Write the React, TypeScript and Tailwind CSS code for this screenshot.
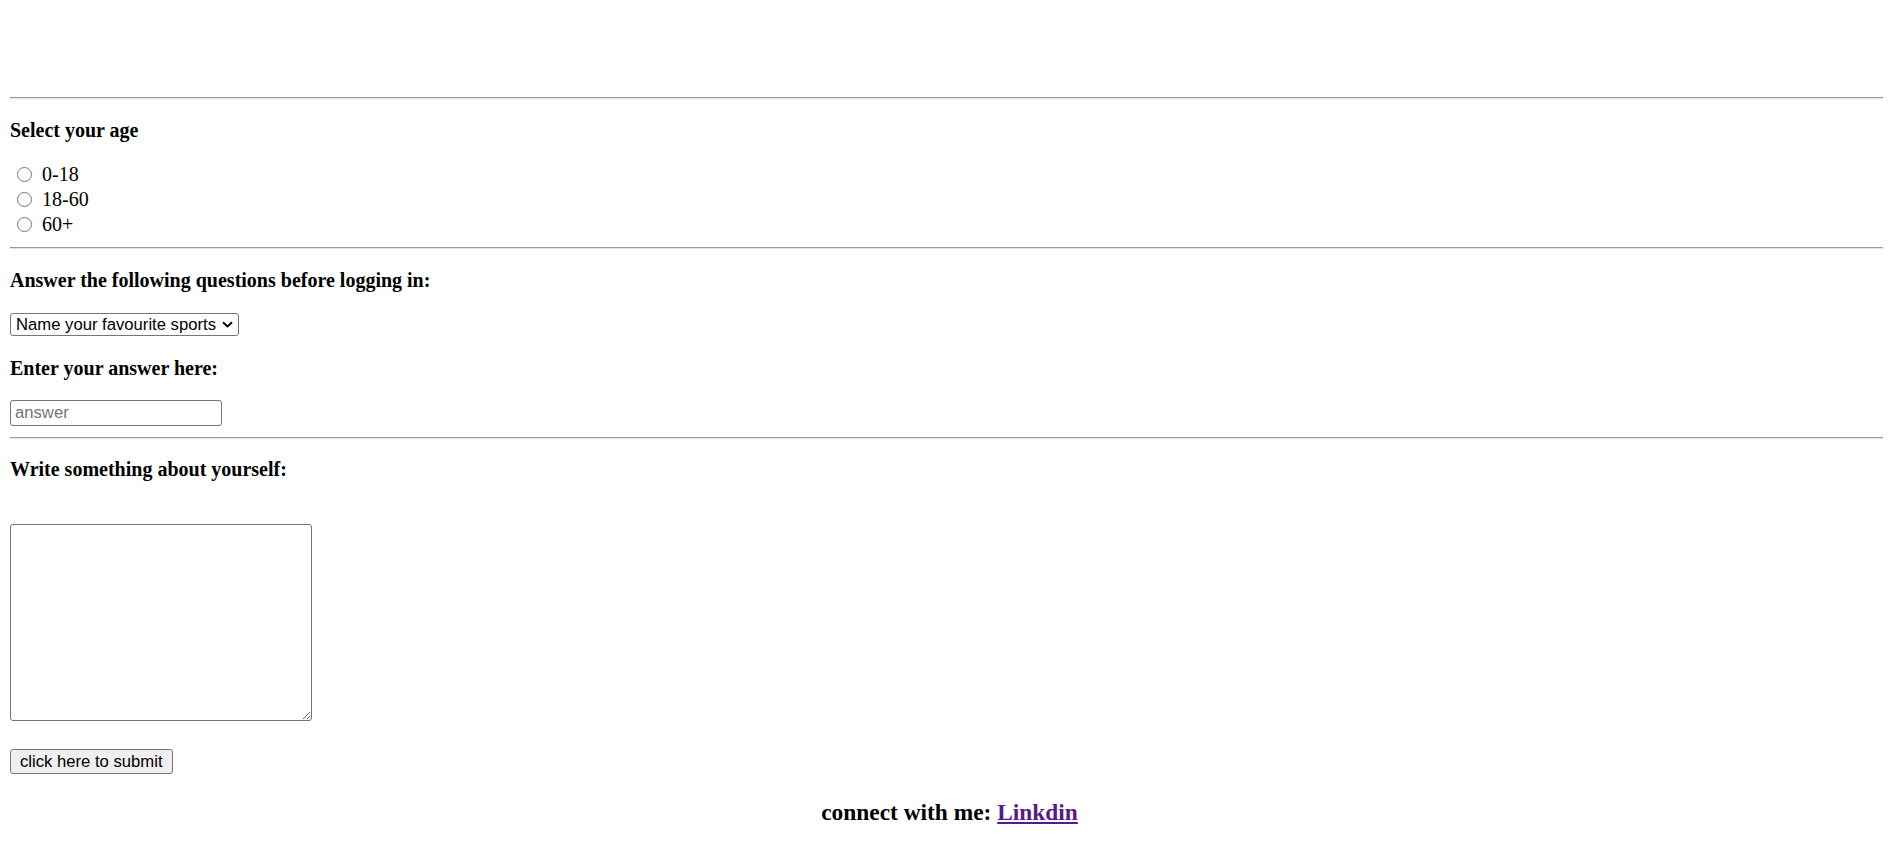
export default function App() {
  const ages = ['0-18', '18-60', '60+']

  return (
    <div className="min-h-screen bg-white px-[10px] pt-[97px] text-black font-['Liberation_Serif',serif]">
      <hr className="h-[2px] border-t border-b border-t-[#9a9a9a] border-b-[#e4e4e4]" />

      {/* age */}
      <p className="mt-[20px] text-[20px] leading-[23px] font-bold">Select your age</p>
      <div className="mt-[19px] flex flex-col">
        {ages.map((age) => (
          <label key={age} className="flex items-start h-[25px] text-[20px] leading-[25px]">
            <input
              type="radio"
              name="age"
              value={age}
              className="appearance-none w-[15px] h-[15px] mt-[6px] ml-[7px] mr-[10px] rounded-full border border-[#767676] bg-white"
            />
            <span className="mt-[1px]">{age}</span>
          </label>
        ))}
      </div>

      <hr className="mt-[11px] h-[2px] border-t border-b border-t-[#9a9a9a] border-b-[#e4e4e4]" />

      {/* questions */}
      <p className="mt-[20px] text-[20px] leading-[23px] font-bold">Answer the following questions before logging in:</p>
      <div className="mt-[21px] relative w-[229px]">
        <select className="w-[229px] h-[23px] appearance-none border border-[#767676] rounded-[3px] bg-white pl-[5px] text-[16.67px] leading-[21px] font-['Liberation_Sans',sans-serif] text-black">
          <option>Name your favourite sports</option>
          <option>Cricket</option>
          <option>Football</option>
        </select>
        <svg className="absolute right-[6px] top-[8px] pointer-events-none" width="11" height="7" viewBox="0 0 11 7">
          <path d="M1 1.2 L5.5 5.5 L10 1.2" fill="none" stroke="#000" strokeWidth="1.9" />
        </svg>
      </div>

      <p className="mt-[20px] text-[20px] leading-[23px] font-bold">Enter your answer here:</p>
      <input
        type="text"
        placeholder="answer"
        className="mt-[20px] block w-[212px] h-[26px] border border-[#767676] rounded-[3px] px-[4px] text-[16.67px] font-['Liberation_Sans',sans-serif] placeholder:text-[#757575]"
      />

      <hr className="mt-[11px] h-[2px] border-t border-b border-t-[#9a9a9a] border-b-[#e4e4e4]" />

      {/* about */}
      <p className="mt-[19px] text-[20px] leading-[23px] font-bold">Write something about yourself:</p>
      <textarea className="mt-[43px] block w-[302px] h-[197px] border border-[#767676] rounded-[3px] resize" />

      <button className="mt-[28px] block h-[25px] px-[9px] whitespace-nowrap border border-[#767676] rounded-[3px] bg-[#efefef] text-[16.67px] leading-[21px] font-['Liberation_Sans',sans-serif] text-black">
        click here to submit
      </button>

      <h3 className="mt-[25px] pl-[6px] text-center text-[23.4px] leading-[27px] font-bold">
        connect with me: <a href="#" className="text-[#551a8b] underline">Linkdin</a>
      </h3>
    </div>
  )
}
